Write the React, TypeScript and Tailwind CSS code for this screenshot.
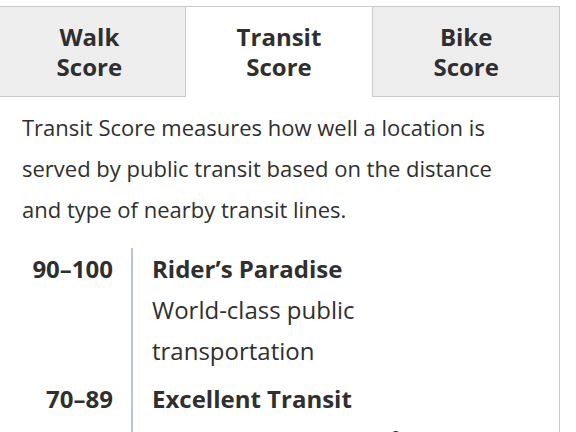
import React from 'react';

const ranges = [
  { range: '90–100', title: 'Rider’s Paradise', desc: 'World-class public transportation' },
  { range: '70–89', title: 'Excellent Transit', desc: 'Transit is convenient for most trips' },
];

export default function App() {
  const tabs = ['Walk', 'Transit', 'Bike'];

  return (
    <div className="w-[576px] h-[432px] overflow-hidden bg-white pt-[6px] text-[#2f2f2f] font-['Open_Sans',sans-serif]">
      <div className="w-[566px] -ml-[6px] border-r border-[#c9c9c9] min-h-[500px]">
        {/* tabs */}
        <div className="flex h-[91px]">
          {tabs.map((t, i) => {
            const active = i === 1;
            return (
              <div
                key={t}
                className={
                  active
                    ? 'w-[187px] bg-white border-t border-[#c9c9c9] flex flex-col items-center justify-center'
                    : i === 0
                    ? 'w-[192px] bg-[#eeeeee] border-t border-r border-b border-[#c9c9c9] flex flex-col items-center justify-center'
                    : 'w-[187px] bg-[#eeeeee] border-t border-l border-b border-[#c9c9c9] flex flex-col items-center justify-center'
                }
              >
                <span className="text-[24px] leading-[30px] font-bold">{t}</span>
                <span className="text-[24px] leading-[30px] font-bold">Score</span>
              </div>
            );
          })}
        </div>

        {/* body */}
        <div className="pl-[28px] pr-[46px] pt-[10px] text-[22px] leading-[41px]">
          Transit Score measures how well a location is served by public transit based on the distance and type of nearby transit lines.
        </div>

        <div className="mt-[18px] flex flex-col">
          {ranges.map((r) => (
            <div key={r.range} className="flex">
              <div className="w-[119px] text-right text-[24px] leading-[41px] font-bold">{r.range}</div>
              <div className="ml-[18px] w-[2px] bg-[#b5c1e6]" />
              <div className="pl-[19px] pb-[7px] w-[360px] text-[24px] leading-[41px]">
                <div className="font-bold">{r.title}</div>
                <div>{r.desc}</div>
              </div>
            </div>
          ))}
        </div>
      </div>
    </div>
  );
}
